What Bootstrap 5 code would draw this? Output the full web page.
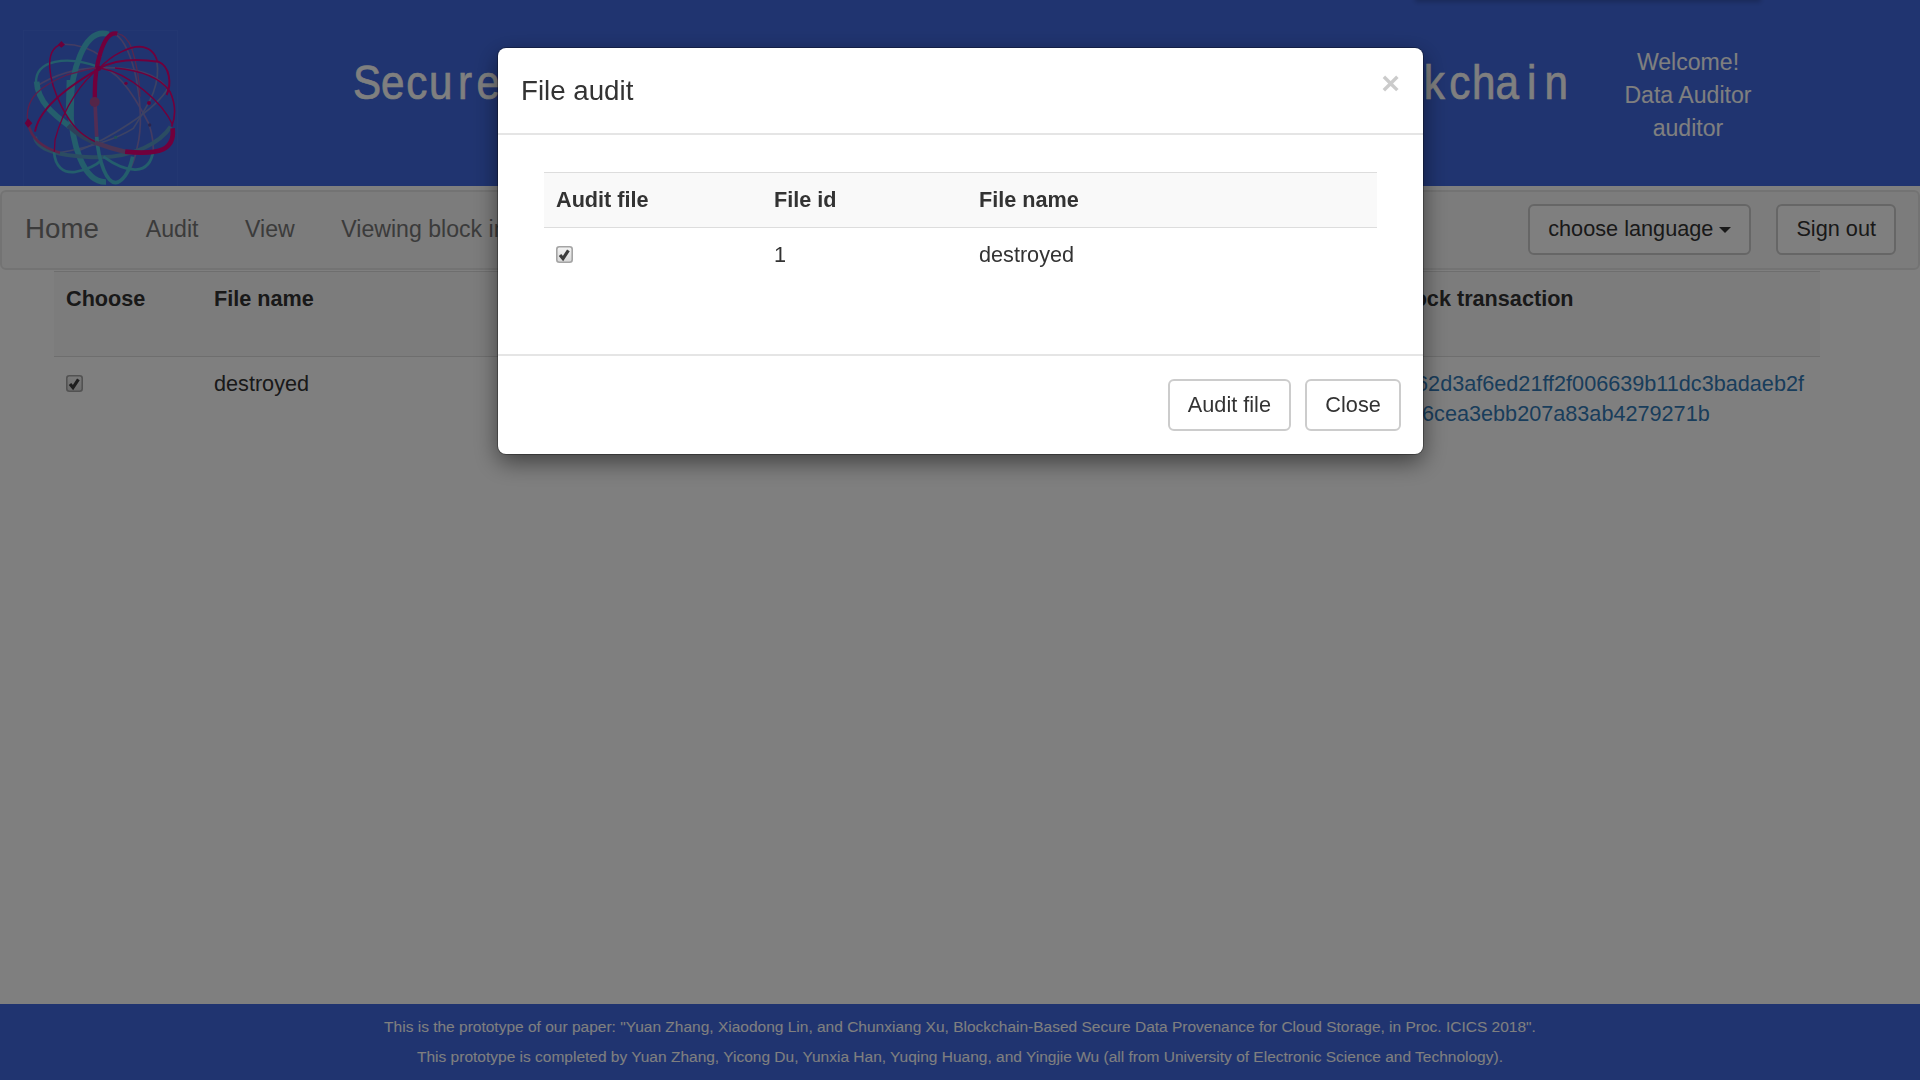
<!DOCTYPE html>
<html lang="en">
<head>
<meta charset="utf-8">
<title>File audit</title>
<link href="https://cdn.jsdelivr.net/npm/bootstrap@5.3.0/dist/css/bootstrap.min.css" rel="stylesheet">
<style>
body{font-family:"Liberation Sans",Arial,sans-serif;font-size:21.65px;line-height:30px;color:#333;height:1080px;overflow:hidden;background:#fff}
.royal{background:#4169e1;color:#fff}
.top-band{height:186px;padding-left:23px}
.logo-box{width:155px;height:156px;margin-top:30px}
.sys-title{width:1215px;margin:52px 0 0 175px;font-size:49px;line-height:60px;font-weight:400;height:60px;white-space:nowrap;-webkit-text-stroke:.7px #fff}
.sys-title>span{display:block;transform:scaleX(.86);transform-origin:left}
.sys-title>span:last-child{transform-origin:right}
.sys-title i{font-style:normal;padding:0 2px}
.sys-title i.wide-k{padding:0 3px 0 1px}
.sys-title i.thin{padding:0 5px 0 6.5px}
.sys-title i.thinner{padding:0 9.5px}
.welcome{font-size:23.1px;line-height:33px;width:200px;margin:46px 0 0 20px}
.top-edge{position:absolute;left:1417px;top:-20px;width:342px;height:20px;box-shadow:0 0 5px 2px rgba(0,0,0,.22)}
.main-nav{height:80px;margin-top:4px;border:2px solid #e7e7e7;border-radius:6px;background:#f8f8f8;padding:0 22px 2px 23px;font-size:23.1px}
.main-nav a{color:#777;text-decoration:none;white-space:nowrap}
.main-nav .home{font-size:27.7px}
.nav-links{gap:46.6px;margin-left:47px}
.btn-plain{--bs-btn-color:#333;--bs-btn-bg:#fff;--bs-btn-border-color:#ccc;--bs-btn-border-width:2px;--bs-btn-border-radius:6px;--bs-btn-font-size:21.7px;--bs-btn-line-height:30px;--bs-btn-padding-y:8.5px;--bs-btn-padding-x:18px;height:51px;white-space:nowrap}
.tri{width:0;height:0;border:6px solid transparent;border-top-color:#333;border-bottom:0;display:inline-block;vertical-align:3px}
.grid-table{border-collapse:separate;border-spacing:0;table-layout:fixed;margin:0;color:#333}
.grid-table th,.grid-table td{padding:12px;border:0;color:#333;vertical-align:top;text-align:left;white-space:nowrap}
.grid-table th{background:#f9f9f9;border-top:1px solid #ddd;border-bottom:1px solid #ddd}
.files{width:1766px;margin:1px 0 0 54px}
.files th{height:86px}
.files a{color:#337ab7;text-decoration:none}
.tick{display:block;width:17px;height:17px;margin-top:6px}
.foot{position:fixed;bottom:0;left:0;right:0;height:76px;padding-top:8px;font-size:15.5px;line-height:30px;text-align:center}
.modal-backdrop{--bs-backdrop-opacity:.5;opacity:.5}
.audit-dialog{width:925px;max-width:none;margin:48px 0 0 498px}
.audit-dialog .modal-content{border:0;border-radius:8px;height:406px;color:#333;box-shadow:0 0 0 1px rgba(0,0,0,.3),0 8px 23px rgba(0,0,0,.5)}
.audit-dialog .modal-header{height:87px;padding:0 23px;border-bottom:2px solid #e5e5e5;flex:none;align-items:flex-start}
.audit-dialog .modal-title{font-size:27.7px;line-height:40px;margin-top:23px;font-weight:400}
.x-close{font-size:32px;line-height:32px;font-weight:700;color:#000;opacity:.2;border:0;background:none;padding:0;margin-top:19px}
.audit-dialog .modal-body{padding:37px 46px 0}
.audit-dialog .modal-footer{height:100px;padding:23px 22px 0;gap:14px;border-top:2px solid #e5e5e5;align-items:flex-start;flex:none}
.audit-dialog .modal-footer>*{margin:0}
.audit-dialog .btn-plain{--bs-btn-padding-x:18.2px;height:52px}
</style>
<script src="https://cdn.jsdelivr.net/npm/bootstrap@5.3.0/dist/js/bootstrap.bundle.min.js"></script>
</head>
<body>
<svg width="0" height="0" class="position-absolute"><defs>
<linearGradient id="boxfill" x1="0" y1="0" x2="0" y2="1"><stop offset="0" stop-color="#f4f4f4"/><stop offset="1" stop-color="#d8d8d8"/></linearGradient>
<g id="tickbox"><rect x=".8" y=".8" width="15.4" height="15.4" rx="2.5" fill="url(#boxfill)" stroke="#a4a4a4" stroke-width="1.6"/><path d="M4 9l3 3.6 5.4-8.2" fill="none" stroke="#3c3c3c" stroke-width="3.2"/></g>
</defs></svg>

<header class="royal top-band d-flex align-items-start">
  <svg class="logo-box" viewBox="69 90 465 468" fill="none">
    <rect x="70" y="91" width="462" height="480" stroke="#4a72e6" stroke-width="2"/>
    <g stroke="#8878c4" stroke-width="5">
      <path d="M105 262Q190 205 305 203Q450 200 500 262"/>
      <path d="M345 103C400 130 440 330 412 440Q395 530 350 545"/>
      <path d="M300 203C350 205 405 290 447 372Q465 430 458 465"/>
      <path d="M470 180C485 260 440 320 400 385Q330 430 180 458" stroke="#7a86c8"/>
      <path d="M505 262C470 330 320 420 235 452" stroke="#7a86c8"/>
      <path d="M184 133Q250 130 305 170"/>
    </g>
    <g stroke="#48bcd8">
      <path d="M326 103C250 80 213 220 211 320C214 430 250 548 318 546" stroke-width="17"/>
      <path d="M212 240L209 350" stroke-width="24"/>
      <path d="M110 245C113 310 170 350 210 380" stroke-width="17"/>
      <path d="M108 250C105 180 200 165 300 202" stroke-width="7"/>
      <path d="M205 376Q250 418 300 432" stroke="#5a80b4" stroke-width="16"/>
      <path d="M105 410C110 450 180 470 300 472C400 470 480 430 512 380" stroke-width="12" stroke="#5699c4"/>
      <path d="M290 410C295 480 320 560 355 546Q385 530 398 470" stroke-width="11"/>
      <path d="M162 455C165 500 190 520 225 516Q280 505 305 480" stroke-width="8"/>
      <path d="M310 470C380 520 450 530 460 450" stroke-width="8"/>
    </g>
    <g stroke="#e00078" stroke-width="6">
      <path d="M285 305C280 200 310 90 352 101" stroke-width="13"/>
      <path d="M352 101Q380 105 395 145C410 190 418 230 420 290" stroke-width="4" stroke="#b0509c"/>
      <path d="M285 305L290 410" stroke="#a45aa8" stroke-width="11"/>
      <path d="M184 133C130 150 145 240 185 320C215 380 245 405 285 425" stroke-width="4.5"/>
      <path d="M84 370C70 290 130 255 200 225Q250 210 298 202" stroke="#b83e98" stroke-width="4"/>
      <path d="M84 370C95 420 130 445 180 458" stroke="#b04c98" stroke-width="8"/>
      <path d="M105 395C120 310 240 240 298 205C360 170 440 180 475 185C510 200 515 250 500 285"/>
      <path d="M298 205C340 160 390 140 420 140Q462 144 472 185" stroke-width="5"/>
      <path d="M298 205C250 240 190 320 165 420L163 455" stroke-width="4"/>
      <path d="M345 204C410 210 480 230 510 275Q535 330 515 380" stroke-width="5"/>
      <path d="M300 204C390 220 490 310 518 375" stroke-width="4"/>
      <path d="M518 385C525 450 480 465 375 455" stroke-width="14"/>
      <path d="M375 455Q330 445 285 428" stroke="#9268a8" stroke-width="14"/>
    </g>
    <g fill="#d40074"><circle cx="284" cy="306" r="15" fill="#a84a90"/><path d="M184 123l11 11-11 9-10-9zM84 355l13 15-13 13-10-13z"/><circle cx="296" cy="205" r="8"/><circle cx="378" cy="250" r="5"/><circle cx="447" cy="309" r="6"/><circle cx="449" cy="375" r="5" fill="#52489c"/><circle cx="347" cy="412" r="5" fill="#489ca8"/></g>
  </svg>
  <h1 class="sys-title d-flex justify-content-between"><span>Se<i>c</i>u<i class="thin">r</i>e</span><span>Blo<i>c</i><i class="wide-k">k</i><i>c</i>ha<i class="thinner">i</i>n</span></h1>
  <div class="welcome text-center">Welcome!<br>Data Auditor<br>auditor</div>
  <div class="top-edge"></div>
</header>

<nav class="main-nav d-flex align-items-center">
  <a class="home" href="#">Home</a>
  <div class="nav-links d-flex"><a href="#">Audit</a><a href="#">View</a><a href="#">Viewing block info</a></div>
  <div class="d-flex ms-auto" style="gap:25px"><button class="btn btn-plain">choose language <span class="tri"></span></button><button class="btn btn-plain">Sign out</button></div>
</nav>

<table class="grid-table files">
  <colgroup><col style="width:148px"><col style="width:1178px"><col></colgroup>
  <tr><th>Choose</th><th>File name</th><th>Block transaction</th></tr>
  <tr><td><svg class="tick" viewBox="0 0 17 17"><use href="#tickbox"/></svg></td><td>destroyed</td><td><a href="#">0362d3af6ed21ff2f006639b11dc3badaeb2f<br>0af6cea3ebb207a83ab4279271b</a></td></tr>
</table>

<footer class="royal foot"><div><span>This is the prototype of our paper: "Yuan Zhang, Xiaodong Lin, and Chunxiang Xu, Blockchain-Based Secure Data Provenance for Cloud Storage, in Proc. ICICS 2018".</span></div><div><span>This prototype is completed by Yuan Zhang, Yicong Du, Yunxia Han, Yuqing Huang, and Yingjie Wu (all from University of Electronic Science and Technology).</span></div></footer>

<div class="modal-backdrop show"></div>
<div class="modal d-block" tabindex="-1">
  <div class="modal-dialog audit-dialog">
    <div class="modal-content">
      <div class="modal-header"><h4 class="modal-title">File audit</h4><button class="x-close">×</button></div>
      <div class="modal-body">
        <table class="grid-table w-100">
          <colgroup><col style="width:218px"><col style="width:205px"><col></colgroup>
          <tr><th>Audit file</th><th>File id</th><th>File name</th></tr>
          <tr><td><svg class="tick" viewBox="0 0 17 17"><use href="#tickbox"/></svg></td><td>1</td><td>destroyed</td></tr>
        </table>
      </div>
      <div class="modal-footer"><button class="btn btn-plain">Audit file</button><button class="btn btn-plain">Close</button></div>
    </div>
  </div>
</div>
</body>
</html>
